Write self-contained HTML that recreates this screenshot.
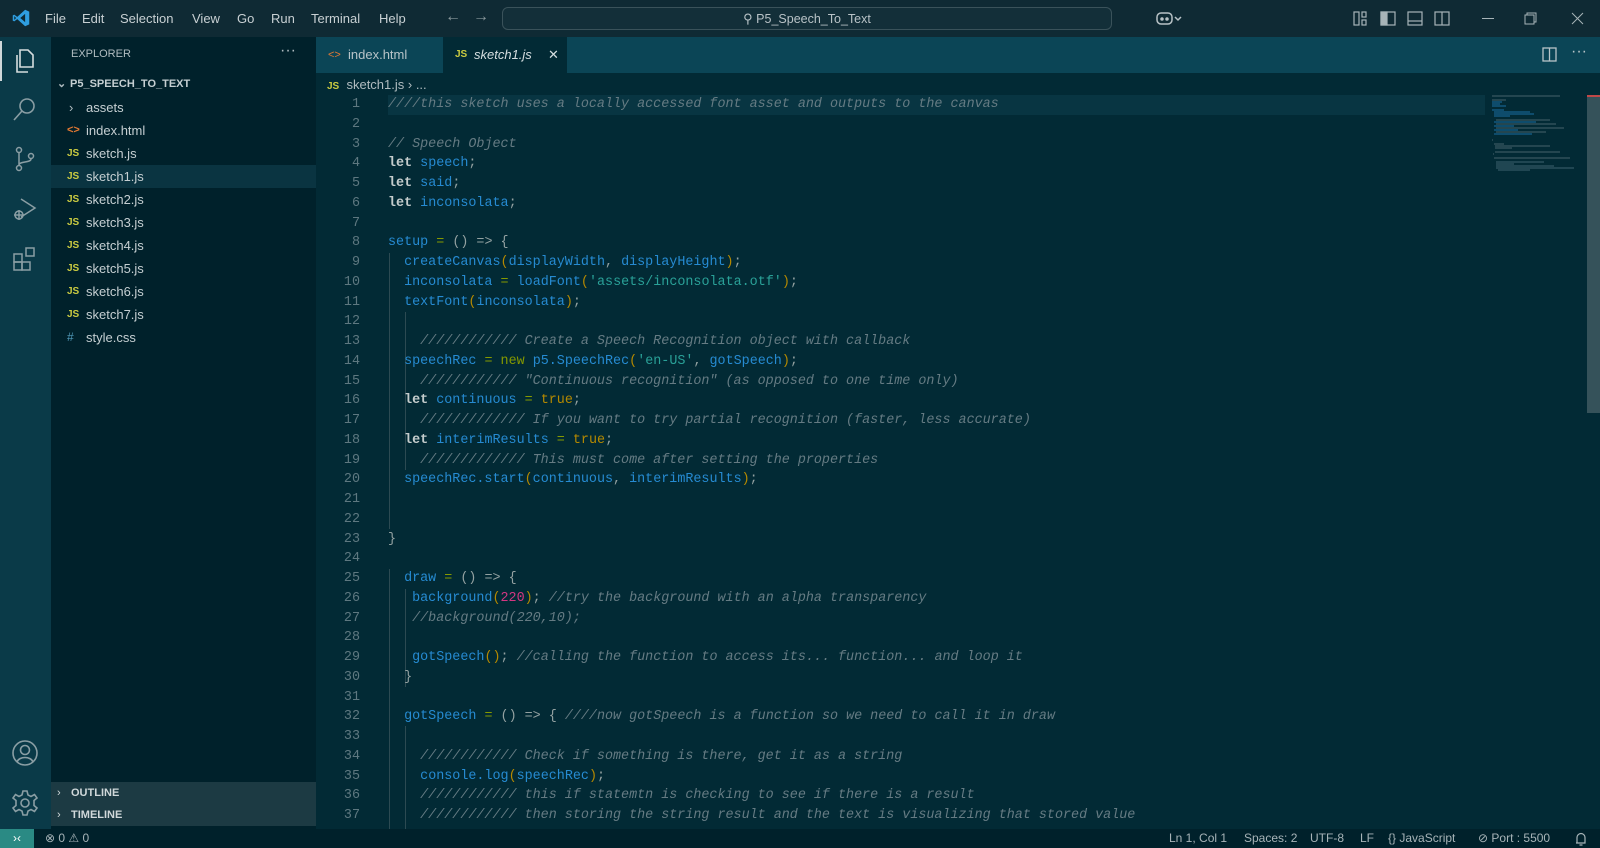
<!DOCTYPE html>
<html><head><meta charset="utf-8"><style>
*{box-sizing:border-box;margin:0;padding:0}
html,body{overflow:hidden}
body{width:1600px;height:848px;overflow:hidden;background:#022a35;font-family:"Liberation Sans",sans-serif;position:relative;color:#b8c4c8}
.abs{position:absolute}
#title{left:0;top:0;width:1600px;height:37px;background:#0f2a34;overflow:hidden}
.menu{position:absolute;top:11px;font-size:13px;color:#c8d0d3}
#search{left:502px;top:7px;width:610px;height:23px;border:1px solid #3a525a;border-radius:6px;background:#132f39;font-size:12.5px;color:#b8c2c6;text-align:center;line-height:21px}
#act{left:0;top:37px;width:51px;height:792px;background:#0a3a48}
#side{left:51px;top:37px;width:265px;height:792px;background:#00212b}
.it{position:absolute;left:0;width:265px;height:23px;font-size:13px;color:#c5cfd2;line-height:23px}
.it .t{position:absolute;left:35px}
.it .js{position:absolute;left:16px;font-size:10px;font-weight:bold;color:#cbcb41}
#tabs{left:316px;top:37px;width:1284px;height:36px;background:#0b4556}
.code{position:absolute;left:316px;top:95px;width:1171px;height:734px;overflow:hidden;font-family:"Liberation Mono",monospace;font-size:13.4px}
.ln{position:absolute;left:0;width:1171px;height:19.75px;line-height:19.75px;white-space:pre}
.n{position:absolute;left:0;width:44px;text-align:right;color:#5e7880}
.c{position:absolute;left:72px;color:#93a1a1}
.cm{color:#657b83;font-style:italic}
.k{color:#c4cccc;font-weight:bold}
.v{color:#268bd2}
.s{color:#2aa198}
.p{color:#b58900}
.g{color:#859900}
.m{color:#d33682}
.guide{position:absolute;width:1px;background:#2c4a52}
#status{left:0;top:829px;width:1600px;height:19px;background:#00212b;font-size:12px;color:#a7b4b8;line-height:19px;overflow:hidden}
#status span{position:absolute}
.bot{position:absolute;left:0;width:265px;height:22px;background:#1c3a43;font-size:11px;font-weight:bold;color:#d0d8da;line-height:22px}
</style></head><body>
<div id="title" class="abs">
<svg class="abs" style="left:12px;top:9px" width="18" height="18" viewBox="0 0 24 24"><path d="M17.5 1 L23 3.5 V20.5 L17.5 23 L7 13.5 L3 16.5 L1 15.5 V8.5 L3 7.5 L7 10.5 Z M17.5 6.5 L11 12 L17.5 17.5 Z M3 9.5 V14.5 L5.5 12 Z" fill="#2f9ee0"/></svg>
<span class="menu" style="left:45px">File</span><span class="menu" style="left:82px">Edit</span><span class="menu" style="left:120px">Selection</span><span class="menu" style="left:192px">View</span><span class="menu" style="left:237px">Go</span><span class="menu" style="left:271px">Run</span><span class="menu" style="left:311px">Terminal</span><span class="menu" style="left:379px">Help</span>
<span class="menu" style="left:445px;font-size:16px;top:8px;color:#8a989c">←</span><span class="menu" style="left:473px;font-size:16px;top:8px;color:#8a989c">→</span>
<div id="search" class="abs"><span style="font-size:13px">⚲</span> P5_Speech_To_Text</div>
<svg class="abs" style="left:1155px;top:9px" width="28" height="18" viewBox="0 0 28 18" fill="none" stroke="#b8c2c6" stroke-width="1.5"><rect x="2" y="4" width="15" height="11" rx="4"/><circle cx="7" cy="10" r="1" fill="#b8c2c6"/><circle cx="12" cy="10" r="1" fill="#b8c2c6"/><path d="M20 8 L23 11 L26 8"/></svg>
<svg class="abs" style="left:1353px;top:11px" width="100" height="16" fill="none" stroke="#a7b4b8" stroke-width="1.2"><rect x="1" y="1" width="5" height="13"/><rect x="9" y="1" width="4" height="5"/><rect x="9" y="9" width="4" height="5"/><rect x="28" y="1" width="14" height="13"/><rect x="28" y="1" width="6" height="13" fill="#a7b4b8"/><rect x="55" y="1" width="14" height="13"/><path d="M55 10 H69"/><rect x="82" y="1" width="14" height="13"/><path d="M89 1 V14"/></svg>
<svg class="abs" style="left:1480px;top:11px" width="110" height="16" fill="none" stroke="#a7b4b8" stroke-width="1"><path d="M2 7.5 H14"/><rect x="45" y="4" width="9" height="9"/><path d="M47 4 V2 H56 V11 H54"/><path d="M92 2 L103 13 M103 2 L92 13"/></svg>
</div>
<div id="act" class="abs">
<div class="abs" style="left:0;top:4px;width:2px;height:40px;background:#d0d8da"></div>
<svg class="abs" style="left:11px;top:10px" width="28" height="28" fill="none" stroke="#d5dcde" stroke-width="1.6"><path d="M9 3 H17 L22 8 V20 H9 Z"/><path d="M6 8 V25 H17"/></svg>
<svg class="abs" style="left:11px;top:58px" width="28" height="28" fill="none" stroke="#8a9ea4" stroke-width="1.6"><circle cx="16" cy="11" r="7"/><path d="M11 16 L3 25"/></svg>
<svg class="abs" style="left:11px;top:108px" width="28" height="28" fill="none" stroke="#8a9ea4" stroke-width="1.5"><circle cx="8" cy="5" r="2.5"/><circle cx="8" cy="23" r="2.5"/><circle cx="20" cy="11" r="2.5"/><path d="M8 8 V20 M20 14 C20 18 8 16 8 20"/></svg>
<svg class="abs" style="left:11px;top:158px" width="28" height="28" fill="none" stroke="#8a9ea4" stroke-width="1.5"><path d="M10 4 L24 13 L10 22"/><circle cx="8" cy="20" r="4"/><path d="M3 20 H13 M8 15 V25"/></svg>
<svg class="abs" style="left:11px;top:208px" width="28" height="28" fill="none" stroke="#8a9ea4" stroke-width="1.5"><rect x="3" y="9" width="8" height="8"/><rect x="3" y="17" width="8" height="8"/><rect x="11" y="17" width="8" height="8"/><rect x="15" y="3" width="8" height="8"/></svg>
<svg class="abs" style="left:11px;top:702px" width="28" height="28" fill="none" stroke="#8a9ea4" stroke-width="1.6"><circle cx="14" cy="14" r="12"/><circle cx="14" cy="11" r="4.5"/><path d="M6 23 C8 17 20 17 22 23"/></svg>
<svg class="abs" style="left:11px;top:752px" width="28" height="28" fill="none" stroke="#8a9ea4" stroke-width="1.6"><circle cx="14" cy="14" r="4"/><path d="M12 2 H16 L17 6 L20 7.5 L23.5 5.5 L26 9 L23 11.5 V16.5 L26 19 L23.5 22.5 L20 20.5 L17 22 L16 26 H12 L11 22 L8 20.5 L4.5 22.5 L2 19 L5 16.5 V11.5 L2 9 L4.5 5.5 L8 7.5 L11 6 Z"/></svg>
</div>
<div id="side" class="abs">
<span class="abs" style="left:20px;top:11px;font-size:11px;color:#b0bcc0">EXPLORER</span>
<span class="abs" style="left:229px;top:5px;font-size:16px;color:#b0bcc0">···</span>
<div class="it" style="top:36px;font-size:11px;font-weight:bold"><span class="abs" style="left:6px;color:#b0bcc0">⌄</span><span class="t" style="left:19px">P5_SPEECH_TO_TEXT</span></div>
<div class="it" style="top:59px"><span class="abs" style="left:18px;color:#b0bcc0">›</span><span class="t">assets</span></div>
<div class="it" style="top:82px"><span class="js" style="color:#e37933;font-size:11px">&lt;&gt;</span><span class="t">index.html</span></div>
<div class="it" style="top:105px"><span class="js">JS</span><span class="t">sketch.js</span></div>
<div class="it" style="top:128px;background:#0a3441"><span class="js">JS</span><span class="t">sketch1.js</span></div>
<div class="it" style="top:151px"><span class="js">JS</span><span class="t">sketch2.js</span></div>
<div class="it" style="top:174px"><span class="js">JS</span><span class="t">sketch3.js</span></div>
<div class="it" style="top:197px"><span class="js">JS</span><span class="t">sketch4.js</span></div>
<div class="it" style="top:220px"><span class="js">JS</span><span class="t">sketch5.js</span></div>
<div class="it" style="top:243px"><span class="js">JS</span><span class="t">sketch6.js</span></div>
<div class="it" style="top:266px"><span class="js">JS</span><span class="t">sketch7.js</span></div>
<div class="it" style="top:289px"><span class="js" style="color:#519aba;font-size:12px;font-weight:normal">#</span><span class="t">style.css</span></div>
<div class="bot" style="top:745px"><span style="position:absolute;left:6px;font-weight:normal">›</span><span style="position:absolute;left:20px">OUTLINE</span></div>
<div class="bot" style="top:767px"><span style="position:absolute;left:6px;font-weight:normal">›</span><span style="position:absolute;left:20px">TIMELINE</span></div>
</div>
<div id="tabs" class="abs">
<div class="abs" style="left:0;top:0;width:127px;height:36px;font-size:13px;color:#b8c4c8;line-height:36px"><span class="abs" style="left:12px;color:#e37933;font-size:11px">&lt;&gt;</span><span class="abs" style="left:32px">index.html</span></div>
<div class="abs" style="left:127px;top:0;width:124px;height:36px;background:#022a35;font-size:13px;color:#d6dee0;line-height:36px"><span class="abs" style="left:12px;color:#cbcb41;font-size:10px;font-weight:bold">JS</span><span class="abs" style="left:31px;font-style:italic">sketch1.js</span><span class="abs" style="left:105px">✕</span></div>
<svg class="abs" style="left:1226px;top:10px" width="16" height="16" fill="none" stroke="#b8c4c8" stroke-width="1.3"><rect x="1" y="1" width="13" height="13"/><path d="M7.5 1 V14"/></svg>
<span class="abs" style="left:1255px;top:6px;font-size:16px;color:#b8c4c8">···</span>
</div>
<div class="abs" style="left:327px;top:77px;font-size:13px;color:#b0bcc0"><span style="color:#cbcb41;font-size:10px;font-weight:bold">JS</span>&nbsp; sketch1.js › ...</div>
<div class="abs" style="left:388px;top:95px;width:1097px;height:20px;background:#083542"></div>
<div class="guide" style="left:389px;top:253px;height:276px"></div>
<div class="guide" style="left:389px;top:569px;height:260px"></div>
<div class="guide" style="left:405px;top:312px;height:158px"></div>
<div class="guide" style="left:405px;top:589px;height:98px"></div>
<div class="guide" style="left:405px;top:726px;height:103px"></div>
<div class="code">
<div class="ln" style="top:0"><span class="n">1</span><span class="c cm">////this sketch uses a locally accessed font asset and outputs to the canvas</span></div>
<div class="ln" style="top:19.75px"><span class="n">2</span></div>
<div class="ln" style="top:39.5px"><span class="n">3</span><span class="c cm">// Speech Object</span></div>
<div class="ln" style="top:59.25px"><span class="n">4</span><span class="c"><span class="k">let</span> <span class="v">speech</span>;</span></div>
<div class="ln" style="top:79px"><span class="n">5</span><span class="c"><span class="k">let</span> <span class="v">said</span>;</span></div>
<div class="ln" style="top:98.75px"><span class="n">6</span><span class="c"><span class="k">let</span> <span class="v">inconsolata</span>;</span></div>
<div class="ln" style="top:118.5px"><span class="n">7</span></div>
<div class="ln" style="top:138.25px"><span class="n">8</span><span class="c"><span class="v">setup</span> <span class="g">=</span> () => {</span></div>
<div class="ln" style="top:158px"><span class="n">9</span><span class="c">  <span class="v">createCanvas</span><span class="p">(</span><span class="v">displayWidth</span>, <span class="v">displayHeight</span><span class="p">)</span>;</span></div>
<div class="ln" style="top:177.75px"><span class="n">10</span><span class="c">  <span class="v">inconsolata</span> <span class="g">=</span> <span class="v">loadFont</span><span class="p">(</span><span class="s">'assets/inconsolata.otf'</span><span class="p">)</span>;</span></div>
<div class="ln" style="top:197.5px"><span class="n">11</span><span class="c">  <span class="v">textFont</span><span class="p">(</span><span class="v">inconsolata</span><span class="p">)</span>;</span></div>
<div class="ln" style="top:217.25px"><span class="n">12</span></div>
<div class="ln" style="top:237px"><span class="n">13</span><span class="c cm">    //////////// Create a Speech Recognition object with callback</span></div>
<div class="ln" style="top:256.75px"><span class="n">14</span><span class="c">  <span class="v">speechRec</span> <span class="g">=</span> <span class="g">new</span> <span class="v">p5.SpeechRec</span><span class="p">(</span><span class="s">'en-US'</span>, <span class="v">gotSpeech</span><span class="p">)</span>;</span></div>
<div class="ln" style="top:276.5px"><span class="n">15</span><span class="c cm">    //////////// "Continuous recognition" (as opposed to one time only)</span></div>
<div class="ln" style="top:296.25px"><span class="n">16</span><span class="c">  <span class="k">let</span> <span class="v">continuous</span> <span class="g">=</span> <span class="p">true</span>;</span></div>
<div class="ln" style="top:316px"><span class="n">17</span><span class="c cm">    ///////////// If you want to try partial recognition (faster, less accurate)</span></div>
<div class="ln" style="top:335.75px"><span class="n">18</span><span class="c">  <span class="k">let</span> <span class="v">interimResults</span> <span class="g">=</span> <span class="p">true</span>;</span></div>
<div class="ln" style="top:355.5px"><span class="n">19</span><span class="c cm">    ///////////// This must come after setting the properties</span></div>
<div class="ln" style="top:375.25px"><span class="n">20</span><span class="c">  <span class="v">speechRec.start</span><span class="p">(</span><span class="v">continuous</span>, <span class="v">interimResults</span><span class="p">)</span>;</span></div>
<div class="ln" style="top:395px"><span class="n">21</span></div>
<div class="ln" style="top:414.75px"><span class="n">22</span></div>
<div class="ln" style="top:434.5px"><span class="n">23</span><span class="c">}</span></div>
<div class="ln" style="top:454.25px"><span class="n">24</span></div>
<div class="ln" style="top:474px"><span class="n">25</span><span class="c">  <span class="v">draw</span> <span class="g">=</span> () => {</span></div>
<div class="ln" style="top:493.75px"><span class="n">26</span><span class="c">   <span class="v">background</span><span class="p">(</span><span class="m">220</span><span class="p">)</span>; <span class="cm">//try the background with an alpha transparency</span></span></div>
<div class="ln" style="top:513.5px"><span class="n">27</span><span class="c cm">   //background(220,10);</span></div>
<div class="ln" style="top:533.25px"><span class="n">28</span></div>
<div class="ln" style="top:553px"><span class="n">29</span><span class="c">   <span class="v">gotSpeech</span><span class="p">()</span>; <span class="cm">//calling the function to access its... function... and loop it</span></span></div>
<div class="ln" style="top:572.75px"><span class="n">30</span><span class="c">  }</span></div>
<div class="ln" style="top:592.5px"><span class="n">31</span></div>
<div class="ln" style="top:612.25px"><span class="n">32</span><span class="c">  <span class="v">gotSpeech</span> <span class="g">=</span> () => { <span class="cm">////now gotSpeech is a function so we need to call it in draw</span></span></div>
<div class="ln" style="top:632px"><span class="n">33</span></div>
<div class="ln" style="top:651.75px"><span class="n">34</span><span class="c cm">    //////////// Check if something is there, get it as a string</span></div>
<div class="ln" style="top:671.5px"><span class="n">35</span><span class="c">    <span class="v">console.log</span><span class="p">(</span><span class="v">speechRec</span><span class="p">)</span>;</span></div>
<div class="ln" style="top:691.25px"><span class="n">36</span><span class="c cm">    //////////// this if statemtn is checking to see if there is a result</span></div>
<div class="ln" style="top:711px"><span class="n">37</span><span class="c cm">    //////////// then storing the string result and the text is visualizing that stored value</span></div>
</div>
<svg class="abs" style="left:1490px;top:95px" width="95" height="80">
<g stroke-width="1" opacity="0.7">
<path d="M2 1 H70" stroke="#657b83"/><path d="M2 5 H16" stroke="#657b83"/><path d="M2 7 H12 M2 9 H10 M2 11 H16" stroke="#268bd2"/>
<path d="M2 15 H14 M4 17 H40 M4 19 H44 M4 21 H20" stroke="#268bd2"/>
<path d="M6 25 H60" stroke="#657b83"/><path d="M4 27 H46" stroke="#268bd2"/><path d="M6 29 H66" stroke="#657b83"/><path d="M4 31 H24" stroke="#268bd2"/><path d="M6 33 H74" stroke="#657b83"/><path d="M4 35 H28" stroke="#268bd2"/><path d="M6 37 H56" stroke="#657b83"/><path d="M4 39 H42" stroke="#268bd2"/>
<path d="M2 45 H3 M4 49 H14 M5 51 H60 M5 53 H22 M5 57 H70 M4 59 H3 M4 63 H80" stroke="#657b83"/>
<path d="M6 67 H54 M6 69 H24 M6 71 H64 M6 73 H84 M8 75 H40" stroke="#5a7a88"/>
</g></svg>
<div class="abs" style="left:1587px;top:73px;width:13px;height:756px;background:#022a35"></div>
<div class="abs" style="left:1587px;top:95px;width:13px;height:318px;background:#35525a"></div>
<div class="abs" style="left:1587px;top:95px;width:13px;height:2px;background:#c04848"></div>
<div id="status" class="abs">
<div class="abs" style="left:0;top:0;width:34px;height:19px;background:#2a8a84;color:#fff;text-align:center;font-size:12px">›‹</div>
<span style="left:45px">⊗ 0 ⚠ 0</span>
<span style="left:1169px">Ln 1, Col 1</span><span style="left:1244px">Spaces: 2</span><span style="left:1310px">UTF-8</span><span style="left:1360px">LF</span><span style="left:1388px">{} JavaScript</span><span style="left:1478px">⊘ Port : 5500</span>
<svg class="abs" style="left:1574px;top:3px" width="14" height="14" fill="none" stroke="#a7b4b8" stroke-width="1.2"><path d="M3 11 V6 C3 3 5 1.5 7 1.5 C9 1.5 11 3 11 6 V11 H2 M12 11 M5.5 13 H8.5"/></svg>
</div>
</body></html>
